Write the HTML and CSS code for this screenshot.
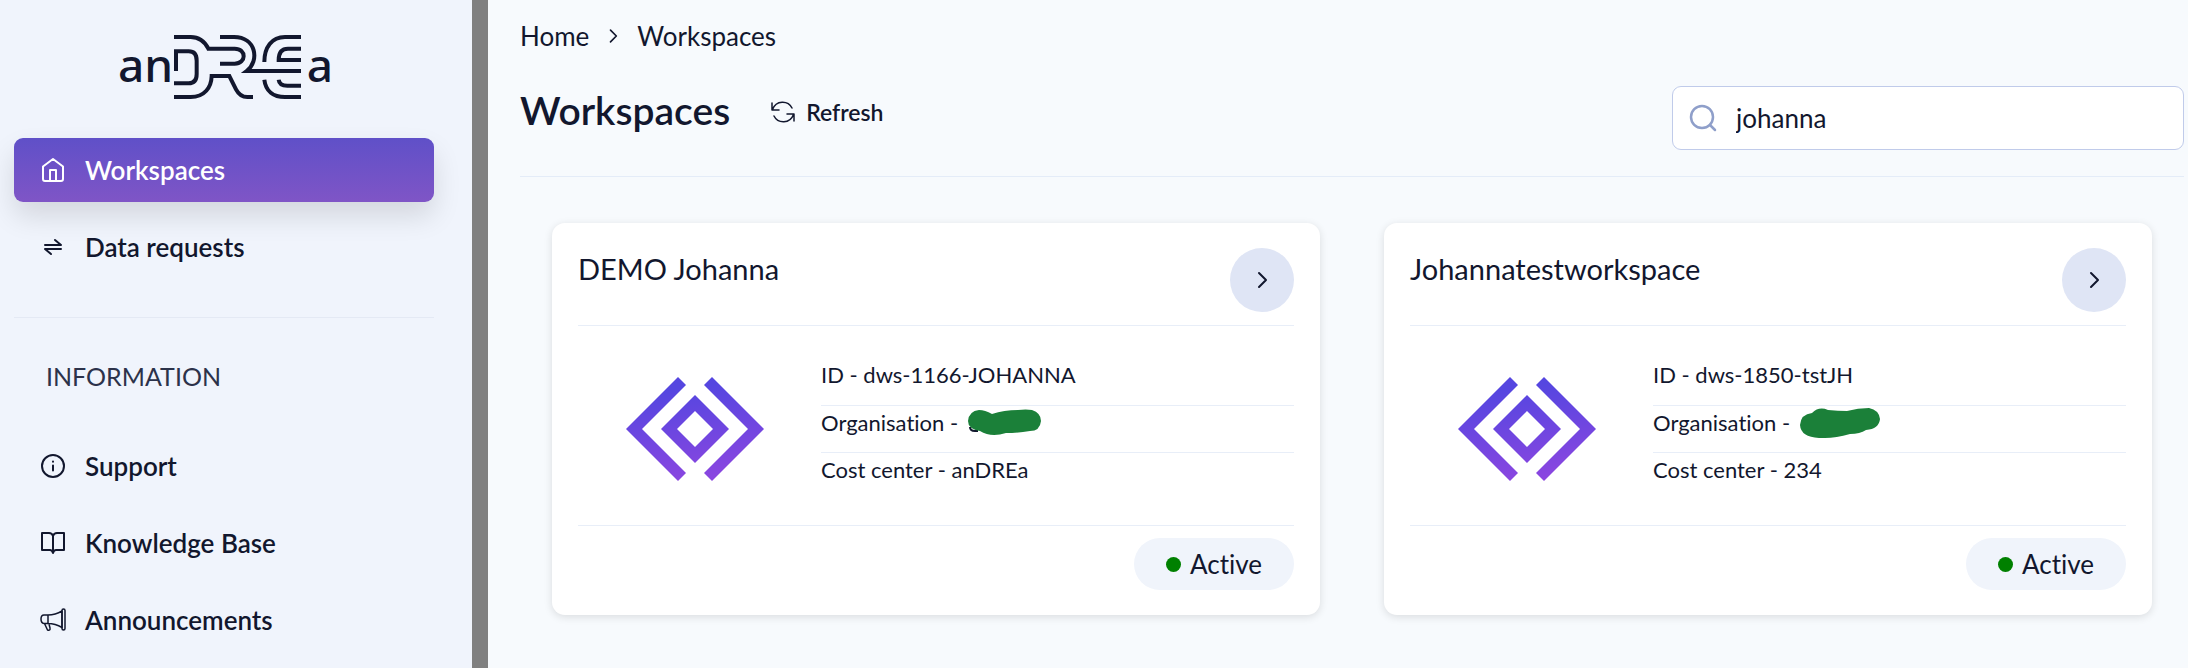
FILE: index.html
```html
<!DOCTYPE html>
<html lang="en">
<head>
    <title>Workspaces</title>
    <meta charset="utf-8" />
    <meta name="viewport" content="width=device-width, initial-scale=1" />
    <link rel="stylesheet" href="styles.css">
</head>
<body>
    <svg class="defs" width="0" height="0" aria-hidden="true">
        <defs>
            <linearGradient id="mark-fill" x1="40%" y1="0%" x2="60%" y2="100%">
                <stop offset="0.1" stop-color="#5546e0" />
                <stop offset="1" stop-color="#8c46e0" />
            </linearGradient>
            <symbol id="mark" viewBox="0 0 138 104">
                <path fill="url(#mark-fill)" d="M52 0l8 8-44 44 44 44-8 8L0 52zM86 0l-8 8 44 44-44 44 8 8 52-52zM69 18l34 34-34 34-34-34zM69 34L51 52l18 18 18-18z" />
            </symbol>
            <symbol id="chevron" viewBox="0 0 24 24">
                <path d="M9 5l7 7-7 7" fill="none" stroke="currentColor" stroke-width="2" stroke-linecap="round" stroke-linejoin="round" />
            </symbol>
        </defs>
    </svg>

    <div class="app">
        <aside class="sidebar">
            <a class="logo" href="#" aria-label="anDREa">
                <svg viewBox="342 105 660 192" width="220" height="64">
                    <text x="354" y="245">an</text>
                    <text x="920" y="245">a</text>
                    <g fill="none" stroke="currentColor" stroke-width="12">
                        <path d="M522 111H572C602 111 616 128 625 146H704C740 146 740 191 704 191H660" />
                        <path d="M528 213V154H566Q590 154 590 182V222Q590 250 566 250H522" />
                        <path d="M660 111H702C768 111 780 182 740 213H903" />
                        <path d="M522 291H572C614 291 634 262 635 228H688L708 268Q720 291 742 291H759" />
                        <path d="M903 111H855C815 111 793 142 793 186" />
                        <path d="M903 146H864Q836 146 836 180H903" />
                        <path d="M793 239C797 273 820 291 855 291H903" />
                        <path d="M836 239Q838 257 862 257H903" />
                    </g>
                </svg>
            </a>

            <nav class="nav">
                <a class="nav-item active" href="#">
                    <svg class="icon" viewBox="0 0 26 26"><path d="M3 9.5L13 2l10 7.500V22q0 2-2 2H5q-2 0-2-2zM10 24V13h6v11" /></svg>
                    Workspaces
                </a>
                <a class="nav-item" href="#">
                    <svg class="icon" viewBox="0 0 26 26"><path d="M5 11h16l-6-5M21 15H5l6 5" /></svg>
                    Data requests
                </a>
            </nav>

            <h2 class="nav-title">INFORMATION</h2>

            <nav class="nav">
                <a class="nav-item" href="#">
                    <svg class="icon" viewBox="0 0 26 26"><circle cx="13" cy="13" r="11" /><path d="M13 12.500v5M13 8.500v.2" /></svg>
                    Support
                </a>
                <a class="nav-item" href="#">
                    <svg class="icon" viewBox="0 0 26 26"><path d="M13 6q-1-3-4-3H2v17h8q2 0 3 3 1-3 3-3h8V3h-7q-3 0-4 3zV22" /></svg>
                    Knowledge Base
                </a>
                <a class="nav-item" href="#">
                    <svg class="icon thin" viewBox="0 0 26 26"><path d="M22 4C17 7 13 8 8 8H4Q1 8 1 12t3 4.500h4c5 0 9 1 14 4zM8 8v8.500M4.500 16.500l3 6.500q3 1 2.500-2l-1-4" /><rect x="22" y="2" width="3" height="21" rx="1.500" /></svg>
                    Announcements
                </a>
            </nav>
        </aside>

        <main class="content">
            <div class="breadcrumb">
                <a href="#">Home</a>
                <svg width="20" height="20"><use href="#chevron" /></svg>
                <a href="#">Workspaces</a>
            </div>

            <div class="toolbar">
                <h1>Workspaces</h1>
                <button class="refresh" type="button">
                    <svg class="icon thin" viewBox="0 0 26 26"><path d="M2 4v7h7M2.500 10.500C6 1 18 1 22 9M24 22v-7h-7M23.500 15.500C20 25 8 25 4 17" /></svg>
                    Refresh
                </button>
                <label class="search">
                    <svg viewBox="0 0 28 28" width="28" height="28"><circle cx="13" cy="13" r="11" /><path d="M21 21l5 5" /></svg>
                    <input type="text" value="johanna" aria-label="Search workspaces">
                </label>
            </div>

            <div class="cards">
                <section class="card">
                    <div class="card-head">
                        <h3>DEMO Johanna</h3>
                        <button class="open" type="button" aria-label="Open DEMO Johanna">
                            <svg width="24" height="24"><use href="#chevron" /></svg>
                        </button>
                    </div>
                    <div class="card-body">
                        <svg class="mark" width="138" height="104"><use href="#mark" /></svg>
                        <ul class="details">
                            <li>ID - dws-1166-JOHANNA</li>
                            <li>
                                Organisation -
                                <svg class="scribble" viewBox="0 0 74 28" width="74" height="28">
                                    <path d="M2 18q0 4 5 4h3" fill="none" stroke="#12172e" stroke-width="2" />
                                    <path d="M11 1Q17 1 24 5 36 1 50 1 58 0 64 1 73 4 73 12 72 22 62 22 50 24 38 24 23 29 12 22 0 20 0 12 1 2 11 1z" />
                                </svg>
                            </li>
                            <li>Cost center - anDREa</li>
                        </ul>
                    </div>
                    <div class="card-foot">
                        <span class="status">Active</span>
                    </div>
                </section>

                <section class="card">
                    <div class="card-head">
                        <h3>Johannatestworkspace</h3>
                        <button class="open" type="button" aria-label="Open Johannatestworkspace">
                            <svg width="24" height="24"><use href="#chevron" /></svg>
                        </button>
                    </div>
                    <div class="card-body">
                        <svg class="mark" width="138" height="104"><use href="#mark" /></svg>
                        <ul class="details">
                            <li>ID - dws-1850-tstJH</li>
                            <li>
                                Organisation -
                                <svg class="scribble" viewBox="0 0 80 30" width="80" height="30">
                                    <path d="M12 5Q19-2 28 2 38 3 47 3 58 0 69 0 79 2 80 11 79 21 66 22 60 26 50 26 36 30 25 30 1 31 0 17 1 6 12 5z" />
                                </svg>
                            </li>
                            <li>Cost center - 234</li>
                        </ul>
                    </div>
                    <div class="card-foot">
                        <span class="status">Active</span>
                    </div>
                </section>
            </div>
        </main>
    </div>
</body>
</html>
```
FILE: styles.css
```css
* {
    box-sizing: border-box;
}

body {
    margin: 0;
    background: #f7fafd;
    color: #12172e;
    font-family: Lato, "Liberation Sans", sans-serif;
    font-size: 26px;
    font-variant-ligatures: none;
    line-height: 32px;
}

a {
    color: inherit;
    text-decoration: none;
}

button,
input {
    border: 0;
    padding: 0;
    background: none;
    color: inherit;
    font: inherit;
}

h1,
h2,
h3,
ul {
    margin: 0;
    padding: 0;
    font-weight: 400;
}

.defs {
    position: absolute;
}

.app {
    display: flex;
    min-height: 100vh;
}

.sidebar {
    flex: 0 0 488px;
    padding: 35px 38px 0 14px;
    border-right: 16px solid #808080;
    background: #f0f4fc;
}

.logo {
    display: flex;
    justify-content: center;
    margin-bottom: 39px;
}

.logo svg {
    overflow: visible;
}

.logo text {
    font-family: "Noto Sans", sans-serif;
    font-size: 138px;
    font-weight: 500;
    fill: currentColor;
}

.nav {
    display: flex;
    flex-direction: column;
    gap: 13px;
}

.nav-item {
    display: flex;
    align-items: center;
    gap: 19px;
    height: 64px;
    padding-left: 26px;
    border-radius: 9px;
    font-weight: 600;
}

.nav-item.active {
    background: linear-gradient(#5f50c8, #7f55c6);
    box-shadow: 0 14px 28px rgba(0, 0, 0, 0.12);
    color: #ffffff;
}

.icon {
    width: 26px;
    height: 26px;
    fill: none;
    stroke: currentColor;
    stroke-width: 2;
    stroke-linecap: round;
    stroke-linejoin: round;
}

.icon.thin {
    stroke-width: 1.5;
}

.nav-title {
    margin: 38px 0 42px;
    padding: 42px 32px 0;
    border-top: 1px solid #e4e9f4;
    color: #2c324a;
    font-size: 25px;
}

.content {
    flex: 1;
    padding: 20px 4px 0 32px;
}

.breadcrumb {
    display: flex;
    align-items: center;
    gap: 14px;
}

.toolbar {
    display: flex;
    align-items: flex-start;
    height: 125px;
    padding-top: 34px;
    border-bottom: 1px solid #e4ecf8;
}

h1 {
    font-size: 39px;
    font-weight: 600;
    line-height: 48px;
}

.refresh {
    display: flex;
    align-items: center;
    gap: 10px;
    height: 52px;
    margin-left: 40px;
    font-size: 23px;
    font-weight: 600;
}

.search {
    display: flex;
    align-items: center;
    gap: 19px;
    width: 512px;
    height: 64px;
    margin-left: auto;
    padding: 0 16px;
    border: 1px solid #c0cbea;
    border-radius: 9px;
    background: #ffffff;
}

.search svg {
    flex: none;
    fill: none;
    stroke: #8f9fca;
    stroke-width: 2.5;
    stroke-linecap: round;
}

.search input {
    flex: 1;
    min-width: 0;
    outline: none;
}

.cards {
    display: grid;
    grid-template-columns: 1fr 1fr;
    gap: 64px;
    padding: 46px 32px 0;
}

.card {
    padding: 25px 26px;
    border-radius: 13px;
    background: #ffffff;
    box-shadow: 0 2px 8px rgba(0, 0, 0, 0.12);
}

.card-head {
    display: flex;
    justify-content: space-between;
    height: 78px;
    border-bottom: 1px solid #e8eef8;
}

.card-head h3 {
    font-size: 29px;
    line-height: 42px;
}

.open {
    display: flex;
    align-items: center;
    justify-content: center;
    width: 64px;
    height: 64px;
    border-radius: 50%;
    background: #dfe5f5;
}

.card-body {
    display: flex;
    align-items: center;
    gap: 57px;
    height: 200px;
    padding-left: 48px;
    border-bottom: 1px solid #e8eef8;
}

.mark {
    flex: none;
    margin-top: 6px;
}

.details {
    flex: 1;
    padding-top: 6px;
    list-style: none;
    font-size: 22px;
}

.details li {
    display: flex;
    align-items: center;
    gap: 10px;
    height: 47px;
    padding-bottom: 14px;
}

.details li + li {
    padding: 0 0 12px;
    border-top: 1px solid #e8eef8;
}

.scribble {
    fill: #1b8039;
}

.card-foot {
    display: flex;
    justify-content: flex-end;
    padding-top: 12px;
}

.status {
    display: flex;
    align-items: center;
    justify-content: center;
    gap: 9px;
    width: 160px;
    height: 52px;
    border-radius: 26px;
    background: #f0f4fb;
}

.status::before {
    content: "";
    width: 15px;
    height: 15px;
    border-radius: 50%;
    background: #008000;
}
```
